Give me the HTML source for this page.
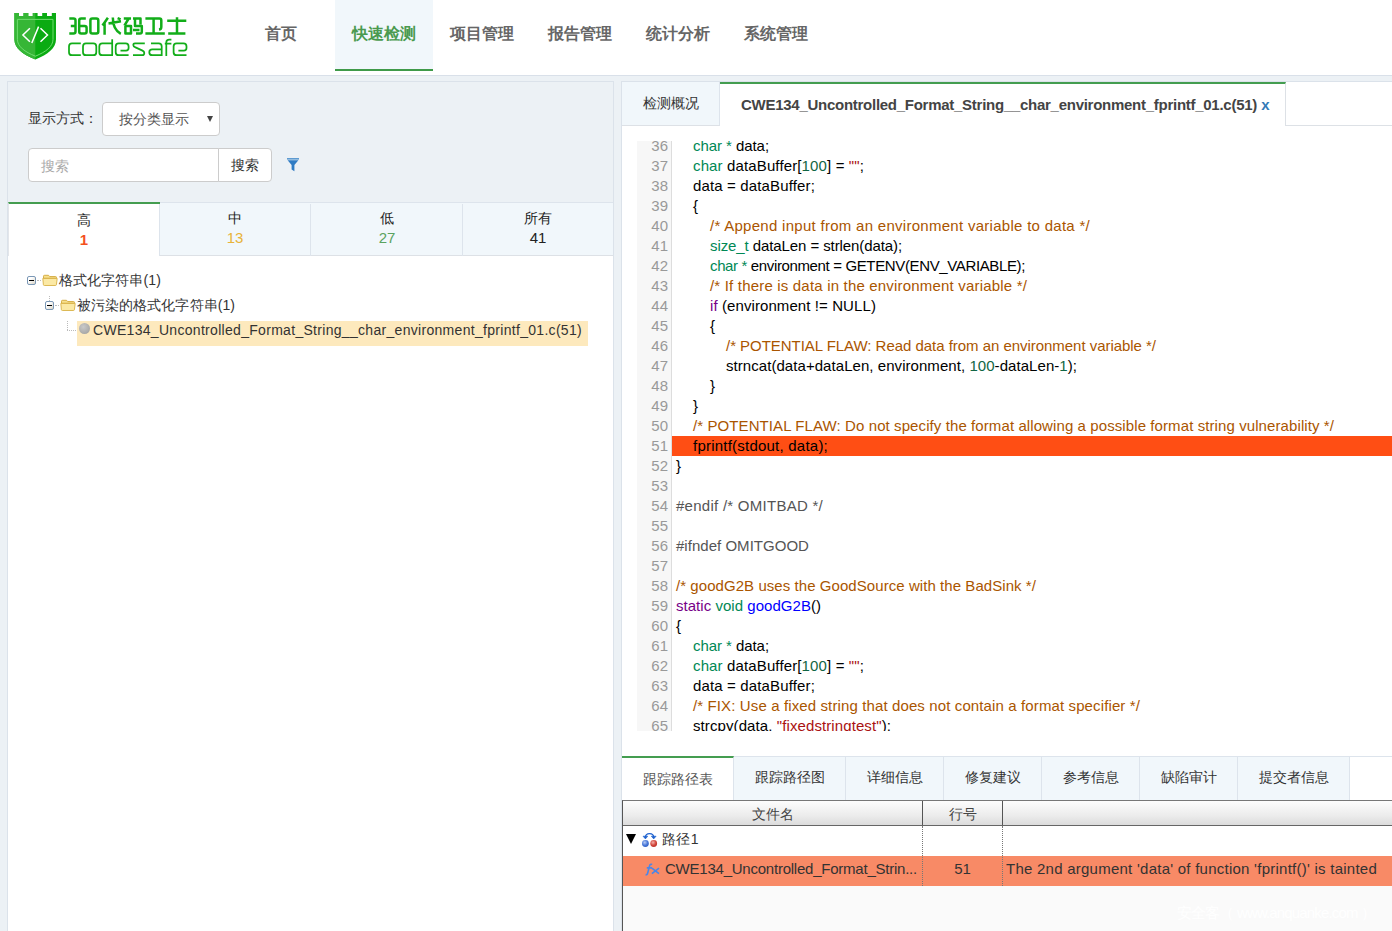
<!DOCTYPE html><html><head><meta charset="utf-8"><title>codesafe</title><style>
*{box-sizing:border-box}
html,body{margin:0;padding:0}
body{width:1392px;height:931px;overflow:hidden;background:#ecf1f5;font-family:"Liberation Sans",sans-serif;font-size:14px;color:#333;position:relative}
.abs{position:absolute}
.t{position:absolute;white-space:pre;line-height:1}
#hdr{position:absolute;left:0;top:0;width:1392px;height:76px;background:#fff;border-bottom:1px solid #d9e0e9}
.nav{position:absolute;top:0;height:71px;width:98px;text-align:center;font-size:16px;font-weight:bold;color:#666;line-height:68px}
.nav.on{background:#f1f7fb;border-bottom:2px solid #3f9a49;color:#4a9a4f}
</style></head><body><div id="hdr"><svg class="abs" style="left:0;top:0" width="200" height="74" viewBox="0 0 200 74"><defs><clipPath id="lh"><rect x="0" y="0" width="35.3" height="74"/></clipPath></defs><path d="M14.4 13.1H19V16H23.5V13.1H28.3V16H32.8V13.1H37.6V16H42.2V13.1H47V16H51.8V13.1H56V39.5C56 48 48 54.5 35.4 59.6C22.5 54.5 14.4 48 14.4 39.5Z" fill="#0aab12"/><path d="M14.4 13.1H19V16H23.5V13.1H28.3V16H32.8V13.1H37.6V16H42.2V13.1H47V16H51.8V13.1H56V39.5C56 48 48 54.5 35.4 59.6C22.5 54.5 14.4 48 14.4 39.5Z" fill="#36b636" clip-path="url(#lh)"/><path d="M17.4 19.4H53V39.3C53 46.5 46 51.8 35.4 56.2C24.6 51.8 17.4 46.5 17.4 39.3Z" fill="none" stroke="#6fdd6f" stroke-width="1"/><path d="M29.9 28.2L22.9 35L29.9 41.8M38.6 26.6L31.8 43M40.5 28.2L47.5 35L40.5 41.8" fill="none" stroke="#fff" stroke-width="1.5" stroke-linecap="butt"/><path d="M69.3 18.6H73.5Q75.5 18.6 75.5 20.6V31.6Q75.5 33.6 73.5 33.6H69.3M70.8 26H75.5M85.8 18.6H81.2Q79.2 18.6 79.2 20.6V31.6Q79.2 33.6 81.2 33.6H84.6Q86.6 33.6 86.6 31.6V28Q86.6 26 84.6 26H79.2M92.4 18.6H96.3Q98.3 18.6 98.3 20.6V31.6Q98.3 33.6 96.3 33.6H92.4Q90.4 33.6 90.4 31.6V20.6Q90.4 18.6 92.4 18.6ZM107.9 17.8L102.5 25.5M104.6 23.2V34.8M108.5 23.6L121 21.2M112.8 17.6Q113 30 120.8 33.8M117.6 18.2L120.6 19.4M123.8 18.6H131M128.4 19L124.4 25.6M125.4 26H131V33.6H125.4ZM133 18.6H140.5V24.5M135 18.6V26H141.8V31.8Q141.8 33.6 140 33.6H136M133 30H139.5M145.4 18.6H159.5Q161.3 18.6 161.3 20.4V27Q161.3 29.3 159 29.6M153.6 18.6V33.6M145.4 33.6H164.8M167.2 20.8H186.3M177 17.2V33.6M168.2 33.6H185.4" fill="none" stroke="#12ad19" stroke-width="2.5" stroke-linejoin="round"/><path d="M80.8 43.4H72Q69 43.4 69 46.4V52.2Q69 55.2 72 55.2H80.8M86 43.4H93.3Q96.3 43.4 96.3 46.4V52.2Q96.3 55.2 93.3 55.2H86Q83 55.2 83 52.2V46.4Q83 43.4 86 43.4ZM112.2 39.2V55.2H102.3Q99.3 55.2 99.3 52.2V46.4Q99.3 43.4 102.3 43.4H112.2M120.5 50.6H126Q128.6 50.6 128.6 48V46.4Q128.6 43.4 125.6 43.4H118.7Q115.7 43.4 115.7 46.4V52.2Q115.7 55.2 118.7 55.2H128.6M144.8 43.4H135Q133.3 43.4 133.3 45Q133.3 46.6 135.5 47.4L142.5 50.6Q144.3 51.4 144.3 53Q144.3 55.2 142.3 55.2H133M151 43.4H158.7Q161.7 43.4 161.7 46.4V55.9M161.7 49.3H152.3Q149.3 49.3 149.3 52.2Q149.3 55.2 152.3 55.2H161.7M171.4 39.5H169.2Q166.3 39.5 166.3 42.4V55.9M164.8 43.6H171.4M178.4 50.6H183.9Q186.5 50.6 186.5 48V46.4Q186.5 43.4 183.5 43.4H176.6Q173.6 43.4 173.6 46.4V52.2Q173.6 55.2 176.6 55.2H186.5" fill="none" stroke="#12ad19" stroke-width="1.75" stroke-linejoin="round"/></svg><div class="nav" style="left:232px">首页</div><div class="nav on" style="left:335px">快速检测</div><div class="nav" style="left:433px">项目管理</div><div class="nav" style="left:531px">报告管理</div><div class="nav" style="left:629px">统计分析</div><div class="nav" style="left:727px">系统管理</div></div><div class="abs" style="left:7px;top:81px;width:607px;height:860px;border:1px solid #dbe2ea;background:#fff"></div><div class="abs" style="left:8px;top:82px;width:605px;height:120px;background:#ecf1f5"></div><div class="t" style="left:28px;top:111px;font-size:14px;color:#333">显示方式：</div><div class="abs" style="left:102px;top:102px;width:118px;height:34px;border:1px solid #ccc;border-radius:4px;background:#fff"></div><div class="t" style="left:119px;top:112px;font-size:14px;color:#555">按分类显示</div><div class="abs" style="left:207px;top:116px;width:0;height:0;border-left:3.5px solid transparent;border-right:3.5px solid transparent;border-top:6px solid #444"></div><div class="abs" style="left:28px;top:148px;width:191px;height:34px;border:1px solid #ccc;border-radius:4px 0 0 4px;background:#fff"></div><div class="t" style="left:41px;top:159px;font-size:14px;color:#aaa">搜索</div><div class="abs" style="left:218px;top:148px;width:54px;height:34px;border:1px solid #ccc;border-radius:0 4px 4px 0;background:#fff"></div><div class="t" style="left:231px;top:158px;font-size:14px;color:#333">搜索</div><svg class="abs" style="left:286px;top:157px" width="14" height="15" viewBox="0 0 14 15"><path d="M1 1.2h12v1.3H1z" fill="#3b86c9"/><path d="M1.6 3.2h10.8L8.4 8v6.3L5.6 12.6V8z" fill="#2f7cc4"/></svg><div class="abs" style="left:8px;top:202px;width:605px;height:54px;background:#f1f7fb;border-top:1px solid #dde4ec;border-bottom:1px solid #dde1e6"></div><div class="abs" style="left:8px;top:202px;width:152px;height:54px;background:#fff;border-top:2px solid #449d50;border-left:1px solid #e3e6ea"></div><div class="abs" style="left:159px;top:204px;width:1px;height:52px;background:#dde4ec"></div><div class="abs" style="left:310px;top:204px;width:1px;height:52px;background:#dde4ec"></div><div class="abs" style="left:462px;top:204px;width:1px;height:52px;background:#dde4ec"></div><div class="t" style="left:44px;width:80px;text-align:center;top:213px;font-size:14px;color:#222">高</div><div class="t" style="left:44px;width:80px;text-align:center;top:232px;font-size:15px;color:#f4511e;font-weight:bold">1</div><div class="t" style="left:195px;width:80px;text-align:center;top:211px;font-size:14px;color:#222">中</div><div class="t" style="left:195px;width:80px;text-align:center;top:230px;font-size:15px;color:#e8b339;font-weight:normal">13</div><div class="t" style="left:347px;width:80px;text-align:center;top:211px;font-size:14px;color:#222">低</div><div class="t" style="left:347px;width:80px;text-align:center;top:230px;font-size:15px;color:#5aa35f;font-weight:normal">27</div><div class="t" style="left:498px;width:80px;text-align:center;top:211px;font-size:14px;color:#222">所有</div><div class="t" style="left:498px;width:80px;text-align:center;top:230px;font-size:15px;color:#222;font-weight:normal">41</div><div class="abs" style="left:27px;top:276px;width:9px;height:9px;border:1px solid #7b98b6;border-radius:2px;background:linear-gradient(135deg,#fff 30%,#d9d4c6)"></div><div class="abs" style="left:29px;top:280px;width:5px;height:1px;background:#000"></div><svg class="abs" style="left:41.5px;top:274px" width="16" height="12" viewBox="0 0 16 14" preserveAspectRatio="none"><path d="M1.5 2.5q0-1 1-1h4l1.2 1.5h5.8q1 0 1 1V5h-13z" fill="#f7e08d" stroke="#d3a93c" stroke-width="1"/><path d="M0.8 5.2h14.4l-0.8 7.3q-0.1 0.9-1 0.9H2.4q-0.9 0-1-0.9z" fill="#fbe9a5" stroke="#d9b34a" stroke-width="1"/></svg><div class="t" style="left:59px;top:273px;font-size:14px;color:#333"><span style="font-size:14px;letter-spacing:0.097px">格式化字符串(1)</span></div><div class="abs" style="left:45px;top:301px;width:9px;height:9px;border:1px solid #7b98b6;border-radius:2px;background:linear-gradient(135deg,#fff 30%,#d9d4c6)"></div><div class="abs" style="left:47px;top:305px;width:5px;height:1px;background:#000"></div><svg class="abs" style="left:59.5px;top:299px" width="16" height="12" viewBox="0 0 16 14" preserveAspectRatio="none"><path d="M1.5 2.5q0-1 1-1h4l1.2 1.5h5.8q1 0 1 1V5h-13z" fill="#f7e08d" stroke="#d3a93c" stroke-width="1"/><path d="M0.8 5.2h14.4l-0.8 7.3q-0.1 0.9-1 0.9H2.4q-0.9 0-1-0.9z" fill="#fbe9a5" stroke="#d9b34a" stroke-width="1"/></svg><div class="t" style="left:77px;top:298px;font-size:14px;color:#333"><span style="font-size:14px;letter-spacing:0.067px">被污染的格式化字符串(1)</span></div><div class="abs" style="left:37px;top:280px;width:4px;height:0;border-top:1px dotted #bbb"></div><div class="abs" style="left:49px;top:296px;width:0;height:5px;border-left:1px dotted #bbb"></div><div class="abs" style="left:55px;top:305px;width:4px;height:0;border-top:1px dotted #bbb"></div><div class="abs" style="left:67px;top:321px;width:0;height:9px;border-left:1px dotted #bbb"></div><div class="abs" style="left:67px;top:330px;width:9px;height:0;border-top:1px dotted #bbb"></div><div class="abs" style="left:77px;top:321px;width:511px;height:25px;background:#fde9bd"></div><div class="abs" style="left:79px;top:323px;width:11px;height:11px;border-radius:6px;background:radial-gradient(circle at 40% 35%,#c9c9c9,#a9a9a9 70%,#9a9a9a)"></div><div class="t" style="left:93px;top:323px;font-size:14px;color:#333"><span style="font-size:14px;letter-spacing:0.302px">CWE134_Uncontrolled_Format_String__char_environment_fprintf_01.c(51)</span></div><div class="abs" style="left:621px;top:81px;width:780px;height:860px;border:1px solid #dbe2ea;background:#fff"></div><div class="abs" style="left:622px;top:82px;width:770px;height:44px;border-bottom:1px solid #dde1e6"></div><div class="abs" style="left:622px;top:82px;width:98px;height:44px;background:#f1f7fb;border-bottom:1px solid #dde1e6;border-right:1px solid #dde4ec"></div><div class="t" style="left:643px;top:96px;font-size:14px;color:#333">检测概况</div><div class="abs" style="left:720px;top:82px;width:566px;height:44px;background:#fff;border-top:2px solid #449d50;border-right:1px solid #dde1e6"></div><div class="t" style="left:741px;top:97px;font-size:15px;font-weight:bold;color:#444"><span style="font-size:15px;font-weight:bold;letter-spacing:-0.269px">CWE134_Uncontrolled_Format_String__char_environment_fprintf_01.c(51)</span><span style="color:#337ab7;font-weight:bold"> x</span></div><div class="abs" style="left:622px;top:141px;width:770px;height:590px;overflow:hidden"><div class="abs" style="left:15px;top:0;width:35px;height:590px;background:#f7f7f7;border-right:1px solid #ddd"></div><div class="t" style="left:15px;width:31px;text-align:right;top:-3px;font-size:15px;color:#999">36</div><div class="t" style="left:71px;top:-3px;font-size:15px"><span style="font-size:15px;letter-spacing:-0.060px"><span style="color:#085">char</span><span style="color:#000"> </span><span style="color:#085">*</span><span style="color:#000"> data;</span></span></div><div class="t" style="left:15px;width:31px;text-align:right;top:17px;font-size:15px;color:#999">37</div><div class="t" style="left:71px;top:17px;font-size:15px"><span style="font-size:15px;letter-spacing:0.132px"><span style="color:#085">char</span><span style="color:#000"> dataBuffer[</span><span style="color:#164">100</span><span style="color:#000">] = </span><span style="color:#a11">&quot;&quot;</span><span style="color:#000">;</span></span></div><div class="t" style="left:15px;width:31px;text-align:right;top:37px;font-size:15px;color:#999">38</div><div class="t" style="left:71px;top:37px;font-size:15px"><span style="font-size:15px;letter-spacing:0.144px"><span style="color:#000">data = dataBuffer;</span></span></div><div class="t" style="left:15px;width:31px;text-align:right;top:57px;font-size:15px;color:#999">39</div><div class="t" style="left:71px;top:57px;font-size:15px"><span style="font-size:15px;letter-spacing:-0.016px"><span style="color:#000">{</span></span></div><div class="t" style="left:15px;width:31px;text-align:right;top:77px;font-size:15px;color:#999">40</div><div class="t" style="left:88px;top:77px;font-size:15px"><span style="font-size:15px;letter-spacing:0.284px"><span style="color:#a50">/* Append input from an environment variable to data */</span></span></div><div class="t" style="left:15px;width:31px;text-align:right;top:97px;font-size:15px;color:#999">41</div><div class="t" style="left:88px;top:97px;font-size:15px"><span style="font-size:15px;letter-spacing:-0.090px"><span style="color:#085">size_t</span><span style="color:#000"> dataLen = strlen(data);</span></span></div><div class="t" style="left:15px;width:31px;text-align:right;top:117px;font-size:15px;color:#999">42</div><div class="t" style="left:88px;top:117px;font-size:15px"><span style="font-size:15px;letter-spacing:-0.363px"><span style="color:#085">char</span><span style="color:#000"> </span><span style="color:#085">*</span><span style="color:#000"> environment = GETENV(ENV_VARIABLE);</span></span></div><div class="t" style="left:15px;width:31px;text-align:right;top:137px;font-size:15px;color:#999">43</div><div class="t" style="left:88px;top:137px;font-size:15px"><span style="font-size:15px;letter-spacing:0.187px"><span style="color:#a50">/* If there is data in the environment variable */</span></span></div><div class="t" style="left:15px;width:31px;text-align:right;top:157px;font-size:15px;color:#999">44</div><div class="t" style="left:88px;top:157px;font-size:15px"><span style="font-size:15px;letter-spacing:0.090px"><span style="color:#708">if</span><span style="color:#000"> (environment != NULL)</span></span></div><div class="t" style="left:15px;width:31px;text-align:right;top:177px;font-size:15px;color:#999">45</div><div class="t" style="left:88px;top:177px;font-size:15px"><span style="font-size:15px;letter-spacing:-0.016px"><span style="color:#000">{</span></span></div><div class="t" style="left:15px;width:31px;text-align:right;top:197px;font-size:15px;color:#999">46</div><div class="t" style="left:104px;top:197px;font-size:15px"><span style="font-size:15px;letter-spacing:-0.036px"><span style="color:#a50">/* POTENTIAL FLAW: Read data from an environment variable */</span></span></div><div class="t" style="left:15px;width:31px;text-align:right;top:217px;font-size:15px;color:#999">47</div><div class="t" style="left:104px;top:217px;font-size:15px"><span style="font-size:15px;letter-spacing:0.057px"><span style="color:#000">strncat(data+dataLen, environment, </span><span style="color:#164">100</span><span style="color:#000">-dataLen-</span><span style="color:#164">1</span><span style="color:#000">);</span></span></div><div class="t" style="left:15px;width:31px;text-align:right;top:237px;font-size:15px;color:#999">48</div><div class="t" style="left:88px;top:237px;font-size:15px"><span style="font-size:15px;letter-spacing:-0.016px"><span style="color:#000">}</span></span></div><div class="t" style="left:15px;width:31px;text-align:right;top:257px;font-size:15px;color:#999">49</div><div class="t" style="left:71px;top:257px;font-size:15px"><span style="font-size:15px;letter-spacing:-0.016px"><span style="color:#000">}</span></span></div><div class="t" style="left:15px;width:31px;text-align:right;top:277px;font-size:15px;color:#999">50</div><div class="t" style="left:71px;top:277px;font-size:15px"><span style="font-size:15px;letter-spacing:0.093px"><span style="color:#a50">/* POTENTIAL FLAW: Do not specify the format allowing a possible format string vulnerability */</span></span></div><div class="abs" style="left:50px;top:295px;width:720px;height:20px;background:#ff4e14"></div><div class="t" style="left:15px;width:31px;text-align:right;top:297px;font-size:15px;color:#999">51</div><div class="t" style="left:71px;top:297px;font-size:15px"><span style="font-size:15px;letter-spacing:0.224px"><span style="color:#000">fprintf(stdout, data);</span></span></div><div class="t" style="left:15px;width:31px;text-align:right;top:317px;font-size:15px;color:#999">52</div><div class="t" style="left:54px;top:317px;font-size:15px"><span style="font-size:15px;letter-spacing:-0.016px"><span style="color:#000">}</span></span></div><div class="t" style="left:15px;width:31px;text-align:right;top:337px;font-size:15px;color:#999">53</div><div class="t" style="left:15px;width:31px;text-align:right;top:357px;font-size:15px;color:#999">54</div><div class="t" style="left:54px;top:357px;font-size:15px"><span style="font-size:15px;letter-spacing:0.264px"><span style="color:#555">#endif /* OMITBAD */</span></span></div><div class="t" style="left:15px;width:31px;text-align:right;top:377px;font-size:15px;color:#999">55</div><div class="t" style="left:15px;width:31px;text-align:right;top:397px;font-size:15px;color:#999">56</div><div class="t" style="left:54px;top:397px;font-size:15px"><span style="font-size:15px;letter-spacing:0.028px"><span style="color:#555">#ifndef OMITGOOD</span></span></div><div class="t" style="left:15px;width:31px;text-align:right;top:417px;font-size:15px;color:#999">57</div><div class="t" style="left:15px;width:31px;text-align:right;top:437px;font-size:15px;color:#999">58</div><div class="t" style="left:54px;top:437px;font-size:15px"><span style="font-size:15px;letter-spacing:0.062px"><span style="color:#a50">/* goodG2B uses the GoodSource with the BadSink */</span></span></div><div class="t" style="left:15px;width:31px;text-align:right;top:457px;font-size:15px;color:#999">59</div><div class="t" style="left:54px;top:457px;font-size:15px"><span style="font-size:15px;letter-spacing:0.036px"><span style="color:#708">static</span><span style="color:#000"> </span><span style="color:#085">void</span><span style="color:#000"> </span><span style="color:#00f">goodG2B</span><span style="color:#000">()</span></span></div><div class="t" style="left:15px;width:31px;text-align:right;top:477px;font-size:15px;color:#999">60</div><div class="t" style="left:54px;top:477px;font-size:15px"><span style="font-size:15px;letter-spacing:-0.016px"><span style="color:#000">{</span></span></div><div class="t" style="left:15px;width:31px;text-align:right;top:497px;font-size:15px;color:#999">61</div><div class="t" style="left:71px;top:497px;font-size:15px"><span style="font-size:15px;letter-spacing:-0.060px"><span style="color:#085">char</span><span style="color:#000"> </span><span style="color:#085">*</span><span style="color:#000"> data;</span></span></div><div class="t" style="left:15px;width:31px;text-align:right;top:517px;font-size:15px;color:#999">62</div><div class="t" style="left:71px;top:517px;font-size:15px"><span style="font-size:15px;letter-spacing:0.132px"><span style="color:#085">char</span><span style="color:#000"> dataBuffer[</span><span style="color:#164">100</span><span style="color:#000">] = </span><span style="color:#a11">&quot;&quot;</span><span style="color:#000">;</span></span></div><div class="t" style="left:15px;width:31px;text-align:right;top:537px;font-size:15px;color:#999">63</div><div class="t" style="left:71px;top:537px;font-size:15px"><span style="font-size:15px;letter-spacing:0.144px"><span style="color:#000">data = dataBuffer;</span></span></div><div class="t" style="left:15px;width:31px;text-align:right;top:557px;font-size:15px;color:#999">64</div><div class="t" style="left:71px;top:557px;font-size:15px"><span style="font-size:15px;letter-spacing:0.121px"><span style="color:#a50">/* FIX: Use a fixed string that does not contain a format specifier */</span></span></div><div class="t" style="left:15px;width:31px;text-align:right;top:577px;font-size:15px;color:#999">65</div><div class="t" style="left:71px;top:577px;font-size:15px"><span style="font-size:15px;letter-spacing:0.097px"><span style="color:#000">strcpy(data, </span><span style="color:#a11">&quot;fixedstringtest&quot;</span><span style="color:#000">);</span></span></div></div><div class="abs" style="left:622px;top:756px;width:770px;height:44px;border-top:1px solid #dde4ec"></div><div class="abs" style="left:622px;top:756px;width:112px;height:44px;background:#fff;border-top:2px solid #449d50;border-right:1px solid #dde4ec"></div><div class="t" style="left:622px;width:112px;text-align:center;top:772px;font-size:14px;color:#555">跟踪路径表</div><div class="abs" style="left:734px;top:757px;width:112px;height:43px;background:#f1f7fb;border-right:1px solid #dde4ec"></div><div class="t" style="left:734px;width:112px;text-align:center;top:770px;font-size:14px;color:#333">跟踪路径图</div><div class="abs" style="left:846px;top:757px;width:98px;height:43px;background:#f1f7fb;border-right:1px solid #dde4ec"></div><div class="t" style="left:846px;width:98px;text-align:center;top:770px;font-size:14px;color:#333">详细信息</div><div class="abs" style="left:944px;top:757px;width:98px;height:43px;background:#f1f7fb;border-right:1px solid #dde4ec"></div><div class="t" style="left:944px;width:98px;text-align:center;top:770px;font-size:14px;color:#333">修复建议</div><div class="abs" style="left:1042px;top:757px;width:98px;height:43px;background:#f1f7fb;border-right:1px solid #dde4ec"></div><div class="t" style="left:1042px;width:98px;text-align:center;top:770px;font-size:14px;color:#333">参考信息</div><div class="abs" style="left:1140px;top:757px;width:98px;height:43px;background:#f1f7fb;border-right:1px solid #dde4ec"></div><div class="t" style="left:1140px;width:98px;text-align:center;top:770px;font-size:14px;color:#333">缺陷审计</div><div class="abs" style="left:1238px;top:757px;width:112px;height:43px;background:#f1f7fb;border-right:1px solid #dde4ec"></div><div class="t" style="left:1238px;width:112px;text-align:center;top:770px;font-size:14px;color:#333">提交者信息</div><div class="abs" style="left:622px;top:800px;width:770px;height:140px;background:#fafafa;border-left:1px solid #555;border-top:1px solid #777"></div><div class="abs" style="left:623px;top:801px;width:769px;height:25px;background:linear-gradient(#fdfdfd,#ececec 60%,#dcdcdc);border-bottom:1px solid #666"></div><div class="abs" style="left:922px;top:801px;width:1px;height:24px;background:#555"></div><div class="abs" style="left:1002px;top:801px;width:1px;height:24px;background:#555"></div><div class="t" style="left:623px;width:299px;text-align:center;top:807px;font-size:14px;color:#444">文件名</div><div class="t" style="left:923px;width:79px;text-align:center;top:807px;font-size:14px;color:#444">行号</div><div class="abs" style="left:623px;top:826px;width:769px;height:30px;background:#fff"></div><div class="abs" style="left:626px;top:834px;width:0;height:0;border-left:5px solid transparent;border-right:5px solid transparent;border-top:10px solid #000"></div><svg class="abs" style="left:640px;top:830px" width="20" height="20" viewBox="640 830 20 20"><defs><radialGradient id="gb" cx="40%" cy="35%" r="70%"><stop offset="0" stop-color="#b9cdf5"/><stop offset="0.6" stop-color="#4a78d8"/><stop offset="1" stop-color="#2f5fc4"/></radialGradient><radialGradient id="gr" cx="40%" cy="35%" r="70%"><stop offset="0" stop-color="#f3b3ad"/><stop offset="0.6" stop-color="#d2453b"/><stop offset="1" stop-color="#b8322a"/></radialGradient></defs><circle cx="645.4" cy="843.5" r="3.4" fill="url(#gb)"/><circle cx="653.7" cy="843.5" r="3.4" fill="url(#gr)"/><path d="M645.4 837.6C645.4 832.2 653.7 832.2 653.7 837.6" fill="none" stroke="#1f62cf" stroke-width="1.2"/><path d="M643 836.2L645.4 838.9L647.8 836.2ZM651.3 836.2L653.7 838.9L656.1 836.2Z" fill="#1f62cf" stroke="#1f62cf" stroke-width="0.6"/></svg><div class="t" style="left:662px;top:832px;font-size:14px;color:#333"><span style="font-size:14px;letter-spacing:0.401px">路径1</span></div><div class="abs" style="left:623px;top:856px;width:769px;height:30px;background:#f88a66"></div><svg class="abs" style="left:644px;top:861px" width="18" height="16" viewBox="644 861 18 16"><path d="M652.2 864.6Q650 863.6 649.5 866L647.7 873Q647.1 875.2 645.6 874.6M646.8 867.9H652M651.9 868.1L659 873.7M659 868.1L651.9 873.7" fill="none" stroke="#4a86e8" stroke-width="1.6"/></svg><div class="t" style="left:665px;top:861px;font-size:15px;color:#333"><span style="font-size:15px;letter-spacing:-0.232px">CWE134_Uncontrolled_Format_Strin...</span></div><div class="t" style="left:923px;width:79px;text-align:center;top:861px;font-size:15px;color:#333">51</div><div class="t" style="left:1006px;top:861px;font-size:15px;color:#333"><span style="font-size:15px;letter-spacing:0.247px">The 2nd argument &#x27;data&#x27; of function &#x27;fprintf()&#x27; is tainted</span></div><div class="abs" style="left:922px;top:826px;width:0;height:60px;border-left:1px dotted #777"></div><div class="abs" style="left:1002px;top:826px;width:0;height:60px;border-left:1px dotted #777"></div><div class="t" style="left:1177px;top:905px;font-size:15px;color:#fff"><span style="font-size:15px;letter-spacing:-0.851px">安全客（ www.anquanke.com ）</span></div></body></html>
